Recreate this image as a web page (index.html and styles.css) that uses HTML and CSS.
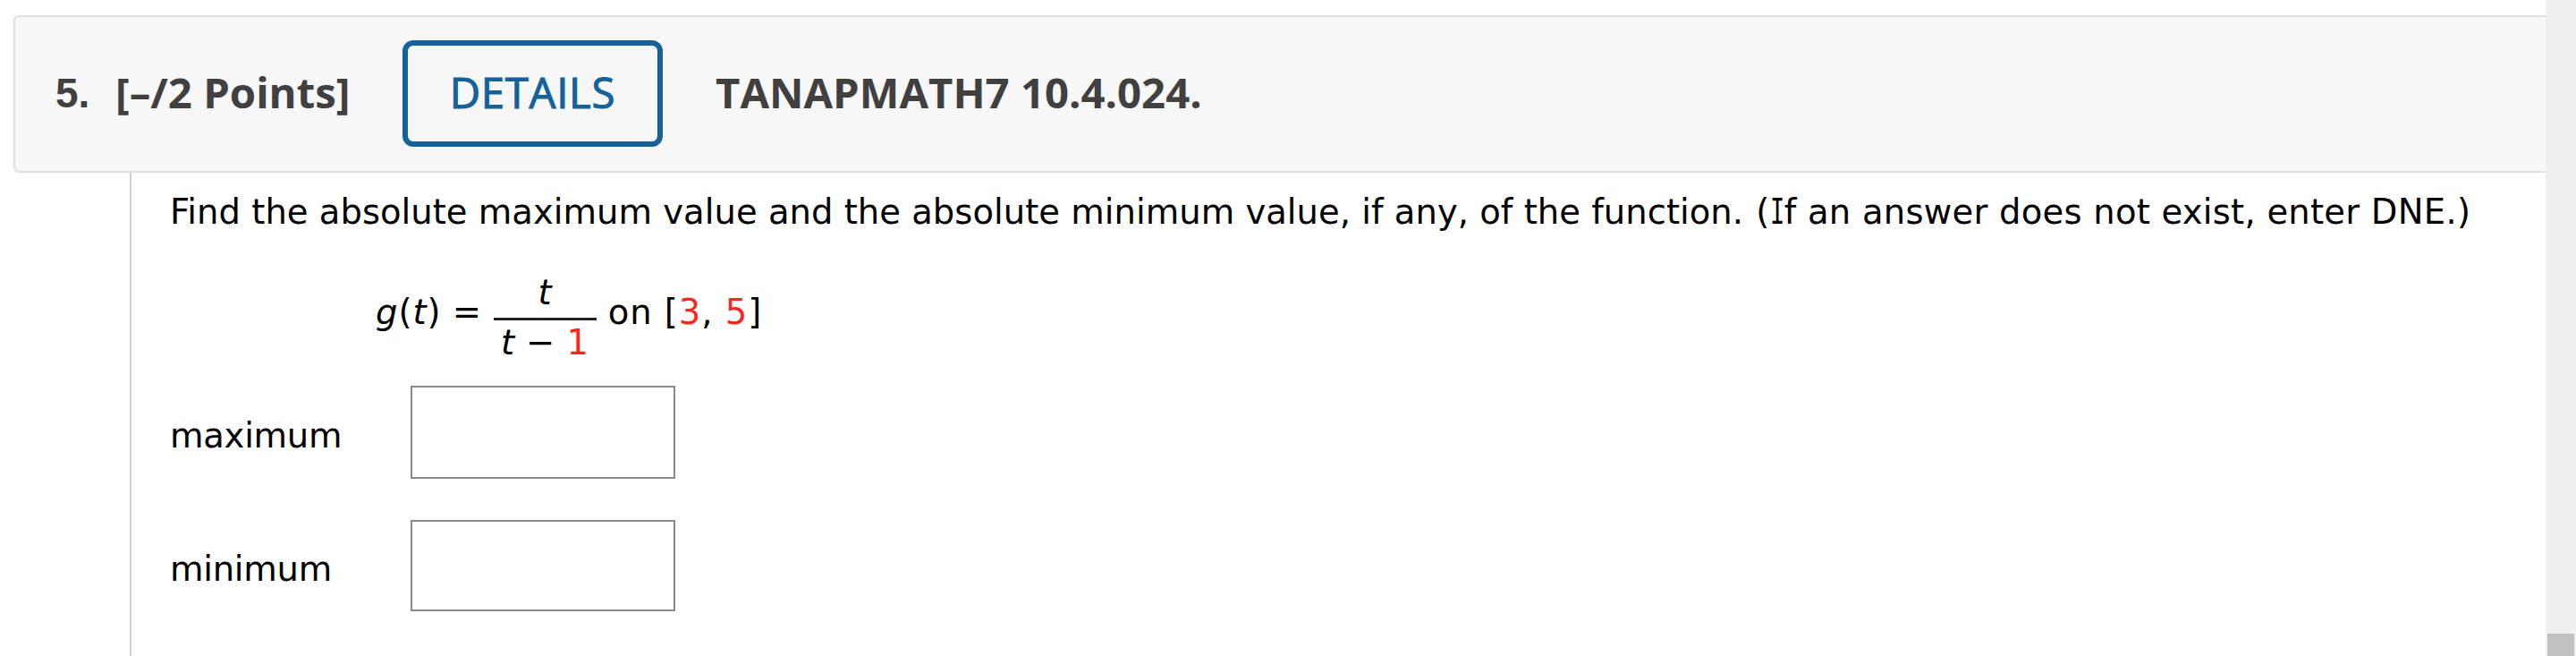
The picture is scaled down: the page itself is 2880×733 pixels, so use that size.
FILE: index.html
```
<!DOCTYPE html>
<html lang="en">
<head>
<meta charset="utf-8">
<title>Question 5</title>
<link rel="stylesheet" href="styles.css">
</head>
<body>
<div class="page">
  <main class="content">
    <header class="question-header">
      <span class="number">5.</span>
      <span class="points">[–/2 Points]</span>
      <button class="details"><span class="details-text">DETAILS</span></button>
      <span class="source">TANAPMATH7 10.4.024.</span>
    </header>
    <section class="question-body">
      <p class="prompt">Find the absolute maximum value and the absolute minimum value, if any, of the function. <span class="note">(<span class="serif-i">I</span>f an answer does not exist, enter DNE.)</span></p>
      <div class="formula">
        <span class="lhs"><i>g</i>(<i>t</i>)</span>
        <span class="equals">=</span>
        <span class="fraction">
          <span class="numerator"><i>t</i></span>
          <span class="denominator"><i>t</i> − <b class="value">1</b></span>
        </span>
        <span class="interval">on [<b class="value">3</b>, <b class="value">5</b>]</span>
      </div>
      <div class="answers">
        <label class="answer"><span class="label">maximum</span><input class="field" type="text"></label>
        <label class="answer"><span class="label">minimum</span><input class="field field-short" type="text"></label>
      </div>
    </section>
  </main>
  <aside class="scrollbar"><div class="thumb"></div></aside>
</div>
</body>
</html>
```

FILE: styles.css
```
* { box-sizing: border-box; }
body { margin: 0; background: #fff; color: #000; font-family: Verdana, "DejaVu Sans", sans-serif; font-size: 38.5px; }
.page { display: flex; height: 733px; overflow: hidden; }
.content { width: 2846px; flex: none; padding: 17px 0 0 15px; display: flex; flex-direction: column; }
.question-header {
  flex: none; display: flex; align-items: center; height: 176px;
  border: 2px solid #dfdfdf; border-right: 0; border-radius: 6px 0 0 6px; background: #f7f7f7;
  color: #404040; font: bold 47.3px/65px "Open Sans", sans-serif; padding: 0 0 2px 45px; white-space: nowrap;
}
.number { width: 67px; font-family: "Liberation Sans", Arial, sans-serif; font-size: 46px; }
.points { width: 321px; padding-bottom: 3px; }
.details {
  width: 291px; height: 119px; padding: 0 0 3px; border: 6px solid #146299; border-radius: 12px;
  background: transparent; color: #146299; font: 500 47.3px/65px "Open Sans", sans-serif;
  letter-spacing: 0.7px; -webkit-text-stroke: 1.1px #146299;
}
.source { margin-left: 59px; padding-bottom: 3px; }
.question-body { flex: 1; margin-left: 130px; border-left: 2px solid #d0d0d0; padding: 21px 0 0 43px; }
.prompt { margin: 0; line-height: 46px; white-space: nowrap; letter-spacing: 0.03px; }
.note { margin-left: 2px; letter-spacing: 0.25px; }
/* Narrow capital I with slab serifs */
.serif-i {
  display: inline-block; width: 0.42em; line-height: 1; letter-spacing: 0;
  font-family: "DejaVu Sans Mono", monospace; transform: scaleX(0.7); transform-origin: left;
}
.formula { display: flex; align-items: flex-start; height: 114px; margin: 36px 0 0 230px; line-height: 46px; white-space: nowrap; }
.lhs { letter-spacing: 1px; padding-top: 30px; }
.equals { margin-left: 12px; width: 46px; padding-top: 30px; }
.fraction { display: flex; flex-direction: column; width: 115px; text-align: center; padding-top: 8px; }
.numerator { border-bottom: 3px solid #222; height: 54px; line-height: 45px; }
.denominator { height: 52px; padding-top: 2px; letter-spacing: 0.4px; }
.interval { margin-left: 13px; padding-top: 30px; letter-spacing: 1px; }
.value { color: #f9261c; font-weight: normal; }
.answers { display: flex; flex-direction: column; gap: 46px; margin-top: 21px; }
.answer { display: flex; align-items: center; }
.label { width: 269px; line-height: 46px; padding-top: 8px; letter-spacing: -0.25px; }
.field { width: 296px; height: 104px; margin: 0; border: 2px solid #8a8a8a; background: #fff; padding: 0 8px; font: inherit; }
.field-short { height: 102px; }
.scrollbar { flex: 1; background: #f0f0f0; padding: 708px 2px 0; }
.thumb { height: 25px; background: #c1c1c1; }
```
